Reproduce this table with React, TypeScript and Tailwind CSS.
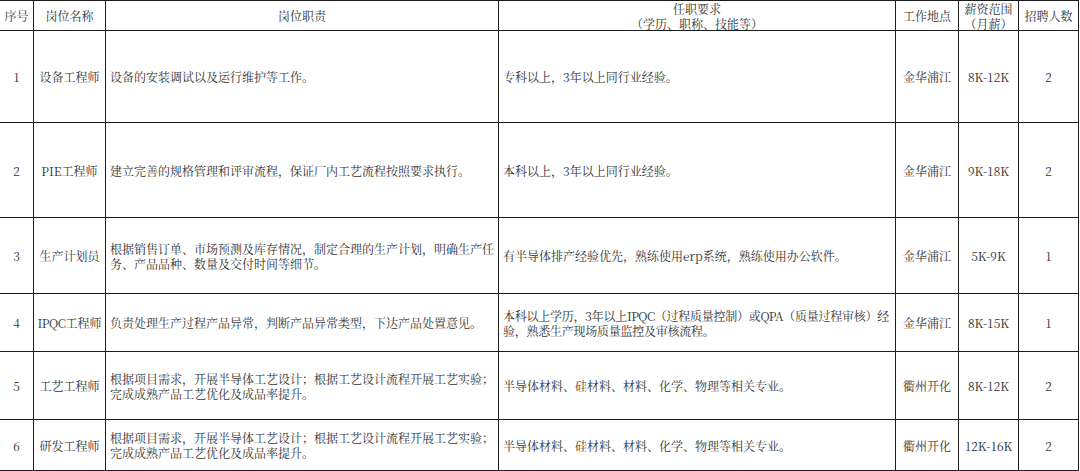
import React from "react";

type Row = {
  no: string;
  name: React.ReactNode;
  duty: React.ReactNode;
  req: React.ReactNode;
  reqTight?: boolean;
  place: string;
  pay: string;
  count: string;
};

const L = ({ children }: { children: React.ReactNode }) => (
  <span className="tracking-[-0.6px]">{children}</span>
);

const rows: Row[] = [
  {
    no: "1",
    name: "设备工程师",
    duty: "设备的安装调试以及运行维护等工作。",
    req: "专科以上，3年以上同行业经验。",
    place: "金华浦江",
    pay: "8K-12K",
    count: "2",
  },
  {
    no: "2",
    name: "PIE工程师",
    duty: "建立完善的规格管理和评审流程，保证厂内工艺流程按照要求执行。",
    req: "本科以上，3年以上同行业经验。",
    place: "金华浦江",
    pay: "9K-18K",
    count: "2",
  },
  {
    no: "3",
    name: "生产计划员",
    duty: (
      <>
        根据销售订单、市场预测及库存情况，制定合理的生产计划，明确生产任
        <br />
        务、产品品种、数量及交付时间等细节。
      </>
    ),
    req: "有半导体排产经验优先，熟练使用erp系统，熟练使用办公软件。",
    place: "金华浦江",
    pay: "5K-9K",
    count: "1",
  },
  {
    no: "4",
    name: (
      <>
        <L>IPQC</L>工程师
      </>
    ),
    duty: "负责处理生产过程产品异常，判断产品异常类型，下达产品处置意见。",
    req: (
      <>
        本科以上学历，3年以上<L>IPQC</L>（过程质量控制）或<L>QPA</L>（质量过程审核）经
        <br />
        验，熟悉生产现场质量监控及审核流程。
      </>
    ),
    reqTight: true,
    place: "金华浦江",
    pay: "8K-15K",
    count: "1",
  },
  {
    no: "5",
    name: "工艺工程师",
    duty: (
      <>
        根据项目需求，开展半导体工艺设计；根据工艺设计流程开展工艺实验；
        <br />
        完成成熟产品工艺优化及成品率提升。
      </>
    ),
    req: "半导体材料、硅材料、材料、化学、物理等相关专业。",
    place: "衢州开化",
    pay: "8K-12K",
    count: "2",
  },
  {
    no: "6",
    name: "研发工程师",
    duty: (
      <>
        根据项目需求，开展半导体工艺设计；根据工艺设计流程开展工艺实验；
        <br />
        完成成熟产品工艺优化及成品率提升。
      </>
    ),
    req: "半导体材料、硅材料、材料、化学、物理等相关专业。",
    place: "衢州开化",
    pay: "12K-16K",
    count: "2",
  },
];

const cell = "border-r border-b border-[#1c1c1c] flex items-center overflow-hidden";
const center = cell + " justify-center text-center";
const left = cell + " justify-start text-left pl-[4px] pr-[1px]";

export default function App() {
  return (
    <div
      className="w-[1080px] h-[471px] bg-white text-[#333333] text-[12px] leading-[15px] overflow-hidden"
      style={{
        fontFamily:
          '"Noto Serif CJK SC", "Liberation Serif", "Noto Sans CJK SC", serif',
      }}
    >
      <div className="grid w-[1079px] border-t border-[#1c1c1c] grid-cols-[34px_72px_393px_397px_63px_60px_60px] grid-rows-[30px_92px_95px_76px_58px_68px_51px]">
        <div className={center}>序号</div>
        <div className={center}>岗位名称</div>
        <div className={center}>岗位职责</div>
        <div className={center + " leading-[15px]"}>
          <div>
            任职要求
            <br />
            （学历、职称、技能等）
          </div>
        </div>
        <div className={center}>工作地点</div>
        <div className={center + " leading-[15px]"}>
          <div>
            薪资范围
            <br />
            （月薪）
          </div>
        </div>
        <div className={center}>招聘人数</div>

        {rows.map((r) => (
          <React.Fragment key={r.no}>
            <div className={center}>{r.no}</div>
            <div className={center + " whitespace-nowrap"}>
              <div>{r.name}</div>
            </div>
            <div className={left + " whitespace-nowrap"}>
              <div>{r.duty}</div>
            </div>
            <div
              className={
                left +
                " whitespace-nowrap" +
                (r.reqTight ? " tracking-[-0.25px]" : "")
              }
            >
              <div>{r.req}</div>
            </div>
            <div className={center}>{r.place}</div>
            <div className={center}>{r.pay}</div>
            <div className={center}>{r.count}</div>
          </React.Fragment>
        ))}
      </div>
    </div>
  );
}
